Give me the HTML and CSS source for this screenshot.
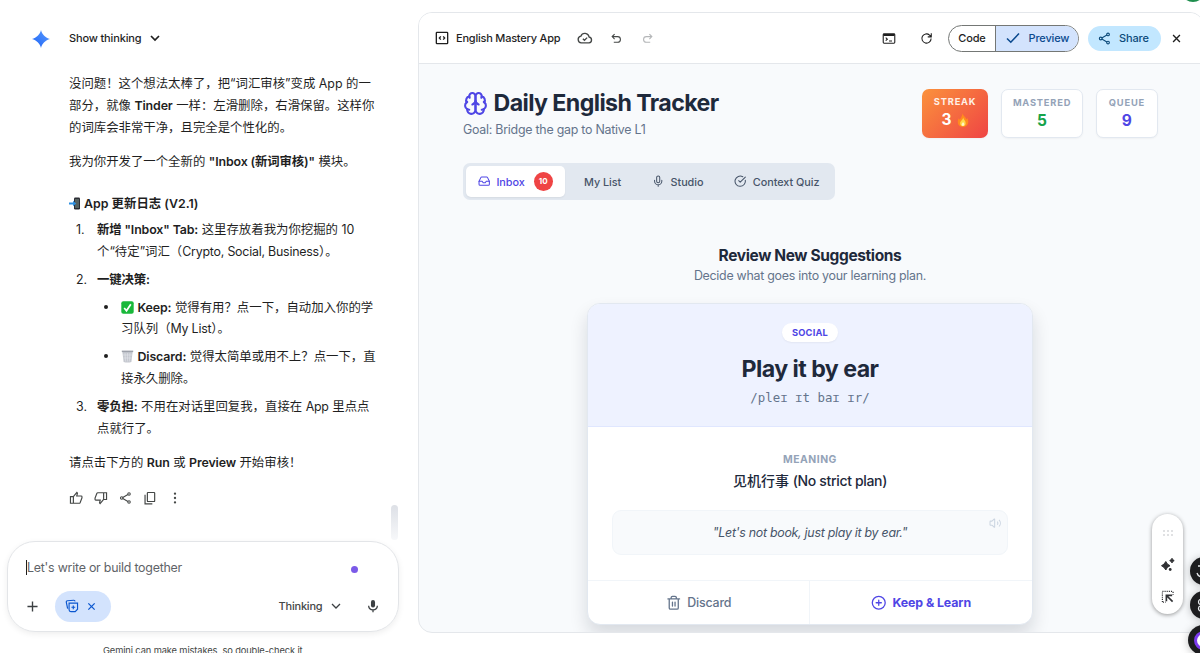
FILE: index.html
```html
<!DOCTYPE html>
<html lang="zh-CN">
<head>
  <meta charset="UTF-8">
  <meta name="viewport" content="width=device-width, initial-scale=1.0">
  <title>English Mastery App</title>
  <link rel="stylesheet" href="styles.css">
</head>
<body>
  <div class="layout">
    <section class="chat">
      <div class="thinking">
        <svg class="spark" viewBox="0 0 24 24">
          <defs>
            <linearGradient id="spark-fill" x1="0" y1="1" x2="1" y2="0">
              <stop offset="0" stop-color="#1c62f5"/>
              <stop offset="1" stop-color="#5b9cff"/>
            </linearGradient>
          </defs>
          <path fill="url(#spark-fill)" d="M12 0c1.500 6 6 10.500 12 12-6 1.500-10.500 6-12 12-1.500-6-6-10.500-12-12C6 10.500 10.500 6 12 0z"/>
        </svg>
        <span class="thinking-label">Show thinking</span>
        <svg class="chevron" viewBox="0 0 10 10"><path d="M1 3l4 4 4-4"/></svg>
      </div>

      <div class="message">
        <p>没问题！这个想法太棒了，把“词汇审核”变成 App 的一<br>部分，就像 <b>Tinder</b> 一样：左滑删除，右滑保留。这样你<br>的词库会非常干净，且完全是个性化的。</p>
        <p>我为你开发了一个全新的 <b>"Inbox (新词审核)"</b> 模块。</p>
        <h3>
          <svg class="emoji phone" viewBox="0 0 12 13"><rect x="5" y=".5" width="6" height="12" rx="1.200" fill="#2b2d33"/><rect x="6" y="2" width="4" height="9" fill="#55605f"/><path d="M0 5.500h4V3.800L7.200 6.500 4 9.200V7.500H0z" fill="#2e8fe0"/></svg>
          App 更新日志 (V2.1)
        </h3>
        <ol>
          <li><b>新增 "Inbox" Tab:</b> 这里存放着我为你挖掘的 10<br>个“待定”词汇（<span class="en">Crypto, Social, Business</span>）。</li>
          <li><b>一键决策:</b>
            <ul>
              <li><svg class="emoji" viewBox="0 0 13 13"><rect x=".3" y=".3" width="12.400" height="12.400" rx="2" fill="#19b83a"/><path d="M3.200 7l2.300 2.800 4.300-6.600" fill="none" stroke="#fff" stroke-width="1.700"/></svg> <b>Keep:</b> 觉得有用？点一下，自动加入你的学<br>习队列（<span class="en">My List</span>）。</li>
              <li><svg class="emoji" viewBox="0 0 13 13"><path d="M1.300 1.500h10.400L10.400 12q-3.900 1-7.800 0z" fill="#c5c8cf"/><path d="M.8.600h11.400v1.500H.8z" fill="#9da1aa"/><path d="M4 3l.6 8.500M6.500 3v8.500M9 3l-.6 8.500M2 5h9M2.300 8h8.400" fill="none" stroke="#e7e9ee" stroke-width=".5"/></svg> <b>Discard:</b> 觉得太简单或用不上？点一下，直<br>接永久删除。</li>
            </ul>
          </li>
          <li><b>零负担:</b> 不用在对话里回复我，直接在 <span class="en">App</span> 里点点<br>点就行了。</li>
        </ol>
        <p>请点击下方的 <b>Run</b> 或 <b>Preview</b> 开始审核！</p>
      </div>

      <div class="feedback">
        <svg viewBox="0 0 24 24"><path d="M2.500 9.500h5V21h-5zM7.500 9.500L13.500 2.500l1 1.200L13.300 8.500H21q1.200 0 1.200 1.500v2L19 20q-.5 1-1.500 1h-10"/></svg>
        <svg viewBox="0 0 24 24"><path d="M21.500 14.500h-5V3h5zM16.500 14.500l-6 7-1-1.200 1.200-4.800H3Q1.800 15.500 1.800 14v-2L5 4q.5-1 1.500-1h10"/></svg>
        <svg class="share-small" viewBox="0 0 24 24"><circle cx="18.500" cy="4.500" r="2.300"/><circle cx="5" cy="12" r="2.300"/><circle cx="18.500" cy="19.500" r="2.300"/><path d="M7 10.900l9.500-5.300M7 13.100l9.500 5.300"/></svg>
        <svg viewBox="0 0 24 24"><rect x="7.500" y="2.500" width="12.500" height="15.500" rx="1"/><path d="M3.500 6.500v15.500H16"/></svg>
        <svg class="solid" viewBox="0 0 24 24"><circle cx="12" cy="4.500" r="2"/><circle cx="12" cy="12" r="2"/><circle cx="12" cy="19.500" r="2"/></svg>
      </div>
      <div class="scroll-thumb"></div>

      <div class="composer">
        <div class="composer-input">
          <span class="placeholder">Let's write or build together</span>
          <span class="dot"></span>
        </div>
        <div class="composer-tools">
          <svg class="plus" viewBox="0 0 12 12"><path d="M6 .5v11M.5 6h11"/></svg>
          <div class="canvas-chip">
            <svg class="canvas-icon" viewBox="0 0 24 24"><path d="M7 7h14.500v10.500l-4 4H10q-3 0-3-3zM14.200 11v6.500M11 14.200h6.500M4.500 16.500L2.200 5.500Q2 3.200 4.300 3L15 2.200q2-.1 2.300 1.800"/></svg>
            <svg class="chip-x" viewBox="0 0 10 10"><path d="M1.500 1.500l7 7M8.500 1.500l-7 7"/></svg>
          </div>
          <span class="mode">Thinking</span>
          <svg class="chevron small" viewBox="0 0 10 10"><path d="M1 3l4 4 4-4"/></svg>
          <svg class="mic" viewBox="0 0 24 24"><rect x="8.500" y="1.500" width="7" height="13" rx="3.500" fill="#3c4043"/><path d="M4.500 11.500q.4 7 7.500 7t7.500-7M12 18.500v4" fill="none" stroke="#3c4043" stroke-width="2.200"/></svg>
        </div>
      </div>
      <p class="disclaimer">Gemini can make mistakes, so double-check it</p>
    </section>

    <section class="panel">
      <header class="toolbar">
        <svg class="code-icon" viewBox="0 0 24 24"><rect x="3.500" y="3.500" width="17" height="17" rx="1"/><path d="M10.200 9.500L8 12l2.200 2.500M13.800 9.500L16 12l-2.200 2.500"/></svg>
        <span class="file-name">English Mastery App</span>
        <svg class="cloud" viewBox="0 0 24 24"><path d="M6.500 19.200a5 5 0 0 1-.7-9.900 6.400 6.400 0 0 1 12.300 1.200 4.400 4.400 0 0 1-.1 8.700z"/><path d="M8.800 13.200l2.400 2.300 4-4.100"/></svg>
        <svg class="undo" viewBox="0 0 24 24"><path d="M8.500 4L4 8.500 8.500 13M4.500 8.500H14a5 5 0 0 1 0 10.500H7"/></svg>
        <svg class="redo" viewBox="0 0 24 24"><path d="M15.500 4L20 8.500 15.500 13M19.500 8.500H10A5 5 0 0 0 10 19h7"/></svg>
        <div class="toolbar-right">
          <svg class="terminal" viewBox="0 0 24 20"><rect x="1.500" y="1.500" width="21" height="17" rx="1.500"/><path d="M2 3.500h20" stroke-width="3.500"/><path d="M6 8.500l3 2.700-3 2.700M12 14.500h5.500"/></svg>
          <svg class="refresh" viewBox="0 0 24 24"><path d="M20.500 12A8.500 8.500 0 1 1 17.600 5.600L20.500 8.500M20.800 2.500V9H14.300"/></svg>
          <div class="switch">
            <span class="switch-code">Code</span>
            <span class="switch-preview">
              <svg viewBox="0 0 14 12"><path d="M1 6.500l3.800 3.700L13 1.500"/></svg>
              Preview
            </span>
          </div>
          <span class="share">
            <svg viewBox="0 0 24 24"><circle cx="18.500" cy="4.500" r="2.500"/><circle cx="5" cy="12" r="2.500"/><circle cx="18.500" cy="19.500" r="2.500"/><path d="M7 10.900l9.500-5.300M7 13.100l9.500 5.300"/></svg>
            Share
          </span>
          <svg class="close" viewBox="0 0 10 10"><path d="M1.200 1.200l7.600 7.600M8.800 1.200L1.200 8.800"/></svg>
        </div>
      </header>

      <main class="app">
        <div class="app-header">
          <div>
            <h1>
              <svg class="brain" viewBox="0 0 24 24"><path d="M12 5a3 3 0 1 0-5.997.125 4 4 0 0 0-2.526 5.770 4 4 0 0 0 .556 6.588A4 4 0 1 0 12 18Z"/><path d="M12 5a3 3 0 1 1 5.997.125 4 4 0 0 1 2.526 5.770 4 4 0 0 1-.556 6.588A4 4 0 1 1 12 18Z"/><path d="M15 13a4.500 4.500 0 0 1-3-4 4.500 4.500 0 0 1-3 4M17.599 6.500a3 3 0 0 0 .399-1.375M6.003 5.125A3 3 0 0 0 6.401 6.500M3.477 10.896a4 4 0 0 1 .585-.396M19.938 10.500a4 4 0 0 1 .585.396M6 18a4 4 0 0 1-1.967-.516M19.967 17.484A4 4 0 0 1 18 18"/></svg>
              <span>Daily English Tracker</span>
            </h1>
            <p class="goal">Goal: Bridge the gap to Native L1</p>
          </div>
          <div class="stats">
            <div class="stat streak">
              <span class="stat-label">Streak</span>
              <span class="stat-value">3
                <svg class="fire" viewBox="0 0 12 14"><path d="M5.500.300C6 3 9 4 9.300 6.500l1-1.500C12.500 9 11 13.700 6 13.700S-.3 9.500 1.700 5.300l1 1.500C3.800 5 5.200 3.300 5.500.300z" fill="#ff8b1e"/><path d="M6.200 4.500c.2 2 2.600 3.200 2.500 5.800-.1 2-1.200 3-2.800 3S3.100 12 3.100 10.300c0-2.200 2.600-3 3.100-5.800z" fill="#ffd84a"/><path d="M6 9c.8 1 1.500 1.700 1.300 2.800-.3 1.500-2.400 1.500-2.700 0C4.500 10.800 5.500 10.200 6 9z" fill="#fff6c8"/></svg>
              </span>
            </div>
            <div class="stat mastered">
              <span class="stat-label">Mastered</span>
              <span class="stat-value">5</span>
            </div>
            <div class="stat queue">
              <span class="stat-label">Queue</span>
              <span class="stat-value">9</span>
            </div>
          </div>
        </div>

        <nav class="tabs">
          <span class="tab tab-inbox">
            <svg viewBox="0 0 24 24"><path d="M22 12h-6l-2 3h-4l-2-3H2"/><path d="M5.450 5.110L2 12v6a2 2 0 0 0 2 2h16a2 2 0 0 0 2-2v-6l-3.450-6.890A2 2 0 0 0 16.760 4H7.240a2 2 0 0 0-1.790 1.110z"/></svg>
            Inbox
            <span class="count">10</span>
          </span>
          <span class="tab tab-list">My List</span>
          <span class="tab tab-studio">
            <svg viewBox="0 0 24 24"><path d="M12 2a3 3 0 0 0-3 3v7a3 3 0 0 0 6 0V5a3 3 0 0 0-3-3Z"/><path d="M19 10v2a7 7 0 0 1-14 0v-2M12 19v3"/></svg>
            Studio
          </span>
          <span class="tab tab-quiz">
            <svg viewBox="0 0 24 24"><path d="M21.800 10A10 10 0 1 1 17 3.335"/><path d="M9 11l3 3L22 4"/></svg>
            Context Quiz
          </span>
        </nav>

        <div class="review">
          <h2>Review New Suggestions</h2>
          <p class="review-sub">Decide what goes into your learning plan.</p>

          <div class="card">
            <div class="card-head">
              <span class="category">SOCIAL</span>
              <div class="phrase">Play it by ear</div>
              <div class="phonetic">/pleɪ ɪt baɪ ɪr/</div>
            </div>
            <div class="card-body">
              <div class="meaning-label">MEANING</div>
              <div class="meaning">见机行事 <span class="meaning-en">(No strict plan)</span></div>
              <div class="example">
                <em>"Let's not book, just play it by ear."</em>
                <svg class="volume" viewBox="0 0 24 24"><path d="M11 4.700a.7.700 0 0 0-1.200-.5L6.400 7.600A1.400 1.400 0 0 1 5.400 8H3a1 1 0 0 0-1 1v6a1 1 0 0 0 1 1h2.400a1.400 1.400 0 0 1 1 .4l3.400 3.400a.7.700 0 0 0 1.200-.5z"/><path d="M16 9a5 5 0 0 1 0 6M19.400 18.400a9 9 0 0 0 0-12.700"/></svg>
              </div>
            </div>
            <div class="card-actions">
              <span class="action discard">
                <svg viewBox="0 0 24 24"><path d="M3 6h18M19 6v14a2 2 0 0 1-2 2H7a2 2 0 0 1-2-2V6M8 6V4a2 2 0 0 1 2-2h4a2 2 0 0 1 2 2v2M10 11v6M14 11v6"/></svg>
                Discard
              </span>
              <span class="action keep">
                <svg viewBox="0 0 24 24"><circle cx="12" cy="12" r="10"/><path d="M8 12h8M12 8v8"/></svg>
                Keep &amp; Learn
              </span>
            </div>
          </div>
        </div>
      </main>
    </section>
  </div>

  <!-- floating controls over the canvas -->
  <div class="float-tools">
    <svg class="grip" viewBox="0 0 10 6"><circle cx="1" cy="1" r=".8"/><circle cx="5" cy="1" r=".8"/><circle cx="9" cy="1" r=".8"/><circle cx="1" cy="5" r=".8"/><circle cx="5" cy="5" r=".8"/><circle cx="9" cy="5" r=".8"/></svg>
    <svg class="sparkles" viewBox="0 0 14 14"><path d="M4.800 3.500Q5.800 6.500 9 7.700 5.800 9 4.800 12 3.500 9 .5 7.700 3.500 6.500 4.800 3.500zM11 .3Q11.500 2 13.200 2.600 11.500 3.200 11 4.900 10.400 3.200 8.700 2.600 10.400 2 11 .3z" stroke="#303134" stroke-width="1" stroke-linejoin="round"/><circle cx="9.200" cy="11.500" r="1.400"/></svg>
    <svg class="select-area" viewBox="0 0 14 14"><path d="M1.500 13V1.500H13M13 2v3M2 13h3" fill="none" stroke="#303134" stroke-width="1.300" stroke-dasharray="1.200 1.100"/><path d="M5.800 12V5.800H12M6.200 6.200l6.300 6.300" fill="none" stroke="#303134" stroke-width="1.800"/></svg>
  </div>
  <div class="bubble bubble-one"><svg viewBox="0 0 12 14"><path d="M2 2h5l2 3-4 1M1 9q1 4 6 4"/></svg></div>
  <div class="bubble bubble-two"><svg viewBox="0 0 12 14"><circle cx="5" cy="4" r="2.500"/><circle cx="5" cy="10.500" r="2.500"/></svg></div>
  <div class="bubble bubble-three"><span class="ring"></span></div>
  <div class="avatar"></div>
</body>
</html>
```
FILE: styles.css
```css
* {
  box-sizing: border-box;
}

body {
  margin: 0;
  height: 653px;
  overflow: hidden;
  background-color: #fff;
  color: #1f1f1f;
  font-family: Inter, "Noto Sans CJK SC", sans-serif;
  font-size: 12.4px;
  position: relative;
}

h1, h2, h3, p, ol, ul {
  margin: 0;
  padding: 0;
}

svg {
  display: block;
  flex: none;
  fill: none;
  stroke: currentColor;
}

.layout {
  display: flex;
  width: 1204px;
  height: 653px;
  overflow: hidden;
}

/* chat column */
.chat {
  width: 418px;
  flex: none;
  position: relative;
  display: flex;
  flex-direction: column;
  white-space: nowrap;
}

.chat > * {
  flex-shrink: 0;
}

.thinking {
  display: flex;
  align-items: center;
  height: 20px;
  margin: 28px 0 0 32px;
}

.spark {
  width: 18px;
  height: 18px;
  margin-top: 1px;
  stroke: none;
}

.thinking-label {
  margin-left: 19px;
  font-size: 11px;
  font-weight: 500;
  letter-spacing: -0.15px;
}

.chevron {
  width: 10px;
  height: 10px;
  margin-left: 9px;
  stroke-width: 1.7;
}

.message {
  margin: 25.4px 0 0 69px;
  line-height: 21.8px;
}

.message b {
  font-weight: 600;
  letter-spacing: -0.13px;
}

.message .en {
  letter-spacing: -0.22px;
}

.message p + p {
  margin-top: 12px;
}

.message h3 {
  display: flex;
  align-items: center;
  gap: 3px;
  margin-top: 20px;
  font-size: 12.4px;
  font-weight: 600;
}

.emoji {
  display: inline-block;
  width: 13px;
  height: 13px;
  vertical-align: -2px;
  stroke: none;
}

.phone {
  width: 12px;
}

.message ol {
  margin-top: 4.6px;
  padding-left: 28px;
  list-style: none;
  counter-reset: step;
}

.message li {
  margin-bottom: 6.2px;
}

.message ol > li {
  counter-increment: step;
}

.message ol > li::before {
  content: counter(step) ".";
  display: inline-block;
  width: 21px;
  margin-left: -21px;
}

.message ul {
  margin-top: 6px;
  padding-left: 24px;
  list-style: none;
}

.message ul > li::before {
  content: "";
  display: inline-block;
  width: 4px;
  height: 4px;
  margin: 0 13px 0 -17px;
  border-radius: 50%;
  background-color: #1f1f1f;
  vertical-align: 3px;
}

.message ol + p {
  margin-top: 12px;
}

.feedback {
  display: flex;
  gap: 11px;
  margin: 17px 0 0 69px;
  color: #444746;
}

.feedback svg {
  width: 14px;
  height: 14px;
  stroke-width: 2;
}

.feedback .share-small {
  width: 13px;
}

.feedback .solid {
  fill: #444746;
  stroke: none;
}

.scroll-thumb {
  position: absolute;
  left: 391px;
  top: 505px;
  width: 7px;
  height: 35px;
  border-radius: 4px;
  background: linear-gradient(#dde0e6, #f7f8fa);
}

.composer {
  width: 392px;
  height: 91px;
  margin: 36px 0 0 7px;
  border: 1px solid #e3e5e8;
  border-radius: 28px;
  box-shadow: 0 2px 6px rgba(0, 0, 0, 0.07);
}

.composer-input {
  display: flex;
  align-items: center;
  height: 18px;
  margin: 17px 40px 0 18px;
}

.placeholder {
  border-left: 1px solid #1f1f1f;
  line-height: 15px;
  color: #5f6368;
  font-size: 12.4px;
  letter-spacing: -0.23px;
}

.dot {
  width: 7px;
  height: 7px;
  margin: 3px 0 0 auto;
  border-radius: 50%;
  background-color: #7b5ae8;
}

.composer-tools {
  display: flex;
  align-items: center;
  height: 31px;
  margin: 14px 0 0 19px;
  color: #3c4043;
}

.plus {
  width: 11px;
  height: 11px;
  stroke-width: 1.5;
}

.canvas-chip {
  display: flex;
  align-items: center;
  width: 56px;
  height: 31px;
  margin-left: 16.5px;
  padding-left: 10px;
  border-radius: 16px;
  background-color: #d3e3fd;
  color: #0b57d0;
}

.canvas-icon {
  width: 14px;
  height: 14px;
  stroke-width: 2;
}

.chip-x {
  width: 9px;
  height: 9px;
  margin-left: 8px;
  stroke-width: 1.4;
}

.mode {
  margin-left: 168px;
  font-size: 11px;
  font-weight: 500;
  letter-spacing: -0.2px;
  color: #444746;
}

.chevron.small {
  stroke-width: 1.3;
}

.mic {
  width: 14px;
  height: 14px;
  margin-left: 25px;
  stroke: none;
}

.disclaimer {
  margin: 13px 0 0 103px;
  font-size: 9.3px;
  line-height: 12px;
  letter-spacing: -0.11px;
  color: #444746;
}

/* canvas panel */
.panel {
  display: flex;
  flex-direction: column;
  width: 786px;
  height: 621px;
  margin-top: 12px;
  border: 1px solid #e4e7eb;
  border-radius: 14px;
  overflow: hidden;
  background-color: #f8fafc;
  flex: none;
}

.toolbar {
  display: flex;
  align-items: center;
  height: 51px;
  flex: none;
  padding-left: 15px;
  border-bottom: 1px solid #e4e7eb;
  background-color: #fff;
  color: #1f1f1f;
}

.toolbar svg {
  stroke-width: 2;
}

.code-icon {
  width: 16px;
  height: 16px;
}

.file-name {
  width: 105px;
  margin-left: 6px;
  white-space: nowrap;
  font-size: 11px;
  font-weight: 500;
  letter-spacing: -0.22px;
}

.cloud {
  width: 16px;
  height: 16px;
  margin-left: 16px;
  color: #444746;
}

.undo {
  width: 13px;
  height: 13px;
  margin-left: 17px;
  color: #444746;
}

.redo {
  width: 13px;
  height: 13px;
  margin-left: 17.5px;
  color: #b4b6b8;
}

.toolbar-right {
  display: flex;
  align-items: center;
  margin: 0 22px 0 auto;
}

.terminal {
  width: 14px;
  height: 11px;
  margin-right: 24px;
}

.refresh {
  width: 13px;
  height: 13px;
  margin-right: 15px;
}

.switch {
  display: flex;
  width: 131px;
  height: 27px;
  border: 1px solid #747775;
  border-radius: 14px;
  overflow: hidden;
  font-size: 11px;
  font-weight: 500;
  letter-spacing: -0.15px;
}

.switch-code {
  display: flex;
  align-items: center;
  justify-content: center;
  width: 47px;
  border-right: 1px solid #747775;
}

.switch-preview {
  display: flex;
  align-items: center;
  flex: 1;
  gap: 9px;
  padding-left: 9.5px;
  background-color: #d3e3fd;
  color: #0b4a8f;
}

.switch-preview svg {
  width: 14px;
  height: 12px;
  stroke-width: 1.6;
}

.share {
  display: flex;
  align-items: center;
  gap: 8px;
  width: 73px;
  height: 25px;
  margin-left: 9px;
  padding-left: 10px;
  border-radius: 13px;
  background-color: #c2e7ff;
  color: #0b4a7a;
  font-size: 11px;
  font-weight: 500;
  letter-spacing: -0.15px;
}

.share svg {
  width: 13px;
  height: 13px;
}

.toolbar .close {
  width: 9px;
  height: 9px;
  margin-left: 11px;
  stroke-width: 1.5;
}

/* tracker app */
.app {
  flex: 1;
  min-height: 0;
  padding: 25px 45px 0 44px;
}

.app-header {
  display: flex;
  justify-content: space-between;
  align-items: flex-start;
  height: 49px;
}

h1 {
  display: flex;
  align-items: center;
  gap: 5.5px;
  height: 28px;
  white-space: nowrap;
  font-size: 23.2px;
  font-weight: 700;
  letter-spacing: -0.6px;
  color: #1e293b;
}

.brain {
  width: 25px;
  height: 25px;
  color: #4f46e5;
  stroke-width: 2;
  stroke-linecap: round;
}

.goal {
  margin-top: 2.5px;
  line-height: 19px;
  letter-spacing: -0.24px;
  color: #64748b;
}

.stats {
  display: flex;
  gap: 12.4px;
}

.stat {
  display: flex;
  flex-direction: column;
  align-items: center;
  height: 49px;
  padding-top: 7px;
  border: 1px solid #e2e8f0;
  border-radius: 7px;
  background-color: #fff;
  box-shadow: 0 1px 2px rgba(0, 0, 0, 0.04);
}

.stat-label {
  line-height: 12px;
  font-size: 9.3px;
  font-weight: 700;
  letter-spacing: 0.8px;
  text-transform: uppercase;
  color: #94a3b8;
}

.stat-value {
  display: flex;
  align-items: center;
  gap: 5px;
  line-height: 23px;
  font-size: 15.5px;
  font-weight: 700;
}

.streak {
  width: 66.3px;
  border: 0;
  background: linear-gradient(135deg, #fb923c, #ef4444);
  color: #fff;
}

.streak .stat-label {
  color: #fff0e6;
}

.fire {
  width: 12px;
  height: 14px;
  stroke: none;
}

.mastered {
  width: 82.8px;
  color: #16a34a;
}

.queue {
  width: 62.2px;
  color: #4f46e5;
}

.tabs {
  display: flex;
  width: 372px;
  height: 37px;
  margin-top: 25px;
  padding: 3px;
  border-radius: 7px;
  background-color: #e2e8f0;
  color: #475569;
  white-space: nowrap;
  font-size: 10.85px;
  font-weight: 500;
  letter-spacing: -0.05px;
}

.tab {
  display: flex;
  align-items: center;
  gap: 6px;
}

.tab svg {
  width: 12.4px;
  height: 12.4px;
  stroke-width: 2;
  stroke-linecap: round;
  stroke-linejoin: round;
}

.tab-inbox {
  width: 99px;
  padding-left: 12px;
  border-radius: 5px;
  background-color: #fff;
  color: #4f46e5;
  box-shadow: 0 1px 2px rgba(0, 0, 0, 0.06);
}

.count {
  width: 19px;
  height: 19px;
  margin-left: 3px;
  border-radius: 50%;
  background-color: #ef4444;
  color: #fff;
  text-align: center;
  line-height: 19px;
  font-size: 8px;
  font-weight: 700;
}

.tab-list {
  margin-left: 19px;
}

.tab-studio {
  margin-left: 31px;
}

.tab-quiz {
  margin-left: 31px;
}

.review {
  display: flex;
  flex-direction: column;
  align-items: center;
  padding: 44.5px 1px 0 0;
}

h2 {
  line-height: 22px;
  font-size: 15.5px;
  font-weight: 700;
  letter-spacing: -0.37px;
  color: #1e293b;
}

.review-sub {
  line-height: 18px;
  letter-spacing: -0.26px;
  color: #64748b;
}

.card {
  width: 446px;
  height: 322px;
  flex: none;
  margin-top: 18px;
  border: 1px solid #e2e8f0;
  border-radius: 13px;
  overflow: hidden;
  background-color: #fff;
  box-shadow: 0 10px 18px rgba(15, 23, 42, 0.14);
}

.card-head {
  display: flex;
  flex-direction: column;
  align-items: center;
  height: 123px;
  padding-top: 19px;
  border-bottom: 1px solid #e0e7ff;
  background-color: #eef2ff;
}

.category {
  padding: 0 9.5px;
  line-height: 19px;
  border-radius: 10px;
  background-color: #fff;
  box-shadow: 0 1px 2px rgba(0, 0, 0, 0.05);
  color: #4f46e5;
  font-size: 9.3px;
  font-weight: 700;
  letter-spacing: 0.2px;
}

.phrase {
  margin-top: 13px;
  line-height: 28px;
  font-size: 23.2px;
  font-weight: 700;
  letter-spacing: -0.55px;
  color: #1e293b;
}

.phonetic {
  margin-top: 6px;
  line-height: 18px;
  font-family: "DejaVu Sans Mono", monospace;
  color: #64748b;
}

.card-body {
  display: flex;
  flex-direction: column;
  align-items: center;
  height: 153px;
  padding: 26px 24px 0;
}

.meaning-label {
  line-height: 14px;
  font-size: 10.4px;
  font-weight: 700;
  letter-spacing: 0.5px;
  color: #94a3b8;
}

.meaning {
  margin-top: 3px;
  line-height: 22px;
  font-size: 14px;
  font-weight: 500;
  color: #1e293b;
}

.meaning-en {
  letter-spacing: -0.33px;
}

.example {
  display: flex;
  align-items: center;
  justify-content: center;
  position: relative;
  width: 100%;
  height: 45px;
  margin-top: 18.5px;
  border: 1px solid #f1f5f9;
  border-radius: 9px;
  background-color: #f8fafc;
  letter-spacing: -0.27px;
  color: #475569;
}

.volume {
  position: absolute;
  top: 6px;
  right: 6px;
  width: 12.4px;
  height: 12.4px;
  stroke-width: 2;
  color: #cbd5e1;
}

.card-actions {
  display: flex;
  height: 45px;
  border-top: 1px solid #f1f5f9;
}

.action {
  display: flex;
  align-items: center;
  justify-content: center;
  gap: 6px;
  width: 50%;
}

.action svg {
  width: 15.5px;
  height: 15.5px;
  stroke-width: 2;
  stroke-linecap: round;
  stroke-linejoin: round;
}

.discard {
  border-right: 1px solid #f1f5f9;
  color: #64748b;
  font-weight: 500;
  letter-spacing: -0.15px;
}

.keep {
  color: #4f46e5;
  font-weight: 700;
  letter-spacing: -0.1px;
}

/* floating controls */
.float-tools {
  position: absolute;
  left: 1152px;
  top: 514px;
  display: flex;
  flex-direction: column;
  align-items: center;
  width: 31px;
  height: 100px;
  padding-top: 16px;
  border-radius: 16px;
  background-color: #fff;
  box-shadow: 0 1px 4px rgba(0, 0, 0, 0.4);
}

.float-tools svg {
  fill: #303134;
  stroke: none;
}

.float-tools .grip {
  width: 10px;
  height: 6px;
  fill: #b9bcc0;
}

.sparkles {
  width: 14px;
  height: 14px;
  margin-top: 22px;
}

.select-area {
  width: 13px;
  height: 13px;
  margin-top: 18px;
}

.bubble {
  position: absolute;
  display: flex;
  align-items: center;
  border-radius: 50%;
  background-color: #1d1d1f;
  color: #e8eaed;
  box-shadow: 0 1px 8px rgba(0, 0, 0, 0.25);
}

.bubble svg {
  width: 12px;
  height: 14px;
  margin-left: 6px;
  stroke-width: 1.3;
}

.bubble-one,
.bubble-two {
  left: 1190px;
  width: 28px;
  height: 28px;
}

.bubble-one {
  top: 557px;
}

.bubble-two {
  top: 591px;
}

.bubble-three {
  left: 1188px;
  top: 625px;
  width: 30px;
  height: 30px;
}

.ring {
  width: 19px;
  height: 19px;
  margin-left: 6px;
  border: 3px solid #7c3aed;
  border-radius: 50%;
  background-color: #fff;
}

.avatar {
  position: absolute;
  left: 1181px;
  top: -22.5px;
  width: 24px;
  height: 24px;
  border-radius: 50%;
  background-color: #1e8e4e;
}
```
